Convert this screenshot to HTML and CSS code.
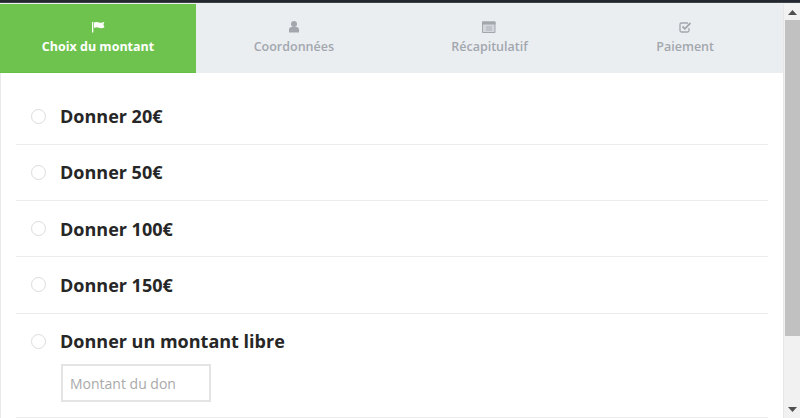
FILE: index.html
```html
<!DOCTYPE html>
<html lang="fr">
<head>
<meta charset="utf-8">
<title>Don</title>
<link rel="stylesheet" href="styles.css">
</head>
<body>
<div class="topbar"></div>
<div class="frame">
  <main class="page">
    <nav class="tabs">
      <div class="tab active">
        <svg class="ico" viewBox="0 0 14 12"><path d="M1 1h1.300v10.500H1zM3 1.600c2-1.100 3.500-.5 5 0 1.500.4 3 .3 5.500-.8-.5 1.200-1 2-1 2.700 0 .8.500 1.700 1 2.700-2.500 1.200-4 1.100-5.500.6-1.500-.6-3-.8-5 .2z" fill="currentColor"/></svg>
        <span>Choix du montant</span>
      </div>
      <div class="tab">
        <svg class="ico" viewBox="0 0 14 12"><circle cx="7" cy="3" r="3" fill="currentColor"/><path d="M2 11.500V8.500C2 7 3.200 6 4.500 6h5C10.800 6 12 7 12 8.500v3z" fill="currentColor"/></svg>
        <span>Coordonnées</span>
      </div>
      <div class="tab">
        <svg class="ico" viewBox="0 0 14 12"><path d="M.5 1h12.500v10.500H.5z" fill="#d3d6db" stroke="currentColor"/><path d="M0 .5h13.500v3H0z" fill="currentColor"/><path d="M4 5h6v5H4z" fill="#c0c4ca"/></svg>
        <span>Récapitulatif</span>
      </div>
      <div class="tab">
        <svg class="ico" viewBox="0 0 14 12"><path d="M11 7v2.500a1.500 1.500 0 0 1-1.500 1.500h-6A1.500 1.500 0 0 1 2 9.500v-6A1.500 1.500 0 0 1 3.500 2h6.500" fill="none" stroke="currentColor" stroke-width="1.300"/><path d="M4.500 5.500l2.300 2.300L12.500 2" fill="none" stroke="currentColor" stroke-width="1.800"/></svg>
        <span>Paiement</span>
      </div>
    </nav>
    <section class="options">
      <label class="option"><span class="radio"></span><span class="label">Donner 20€</span></label>
      <label class="option"><span class="radio"></span><span class="label">Donner 50€</span></label>
      <label class="option"><span class="radio"></span><span class="label">Donner 100€</span></label>
      <label class="option"><span class="radio"></span><span class="label">Donner 150€</span></label>
      <div class="option free">
        <div class="free-head"><span class="radio"></span><span class="label">Donner un montant libre</span></div>
        <input class="amount" type="text" placeholder="Montant du don">
      </div>
    </section>
  </main>
  <aside class="scrollbar">
    <svg class="arrow first" viewBox="0 0 9 5"><path d="M0 5L4.500 0 9 5z"/></svg>
    <div class="thumb"></div>
    <div class="track"></div>
    <svg class="arrow" viewBox="0 0 9 5"><path d="M0 0L4.500 5 9 0z"/></svg>
  </aside>
</div>
</body>
</html>
```
FILE: styles.css
```css
* { box-sizing: border-box; }
html, body { margin: 0; height: 418px; overflow: hidden; }
body { font-family: "Open Sans", "Liberation Sans", sans-serif; background: #fff; display: flex; flex-direction: column; }
.topbar { height: 3px; background: #23282e; border-bottom: 1px solid #3c4248; flex: none; }
.frame { display: flex; flex: 1; min-height: 0; border-top: 1px solid #eef0f2; }
.page { flex: 1; min-width: 0; border-left: 1px solid #e9e9e9; }
.tabs { display: grid; grid-template-columns: 196px 1fr 1fr 1fr; height: 69px; background: #ebeef1; margin-left: -1px; }
.tab { display: flex; flex-direction: column; align-items: center; padding-top: 17px; color: #a2a7ae; font-size: 12.5px; font-weight: 600; line-height: 18px; gap: 5px; }
.tab.active { background: #6ec34e; color: #fff; font-weight: 700; border-bottom: 1px solid #66bf45; }
.ico { width: 14px; height: 12px; display: block; }
.options { padding: 15.5px 15px 0; }
.option { display: flex; align-items: center; height: 56.25px; padding-left: 15px; border-bottom: 1px solid #ececec; }
.radio { width: 15px; height: 15px; border-radius: 50%; border: 1.5px solid #dcdcdc; background: #fff; margin-right: 14px; flex: none; }
.label { font-size: 18px; font-weight: 700; color: #262626; line-height: 24px; }
.free { display: block; height: 104px; padding-top: 15.5px; }
.free-head { display: flex; align-items: center; height: 24px; }
.amount { display: block; width: 150px; height: 38px; margin: 11px 0 0 30px; border: 2px solid #e4e4e4; padding: 0 7px; font: 400 14px "Open Sans", sans-serif; background: #fff; outline: none; }
.amount::placeholder { color: #a9a9a9; opacity: 1; }
.scrollbar { width: 17px; flex: none; background: #f1f1f1; display: flex; flex-direction: column; align-items: center; border-left: 1px solid #e6e6e6; }
.arrow { width: 9px; height: 5px; flex: none; fill: #505050; margin: 6px 0; }
.arrow.first { margin-bottom: 5px; }
.scrollbar .thumb { width: 15px; height: 316px; background: #c1c1c1; flex: none; align-self: flex-end; }
.track { flex: 1; }
```
